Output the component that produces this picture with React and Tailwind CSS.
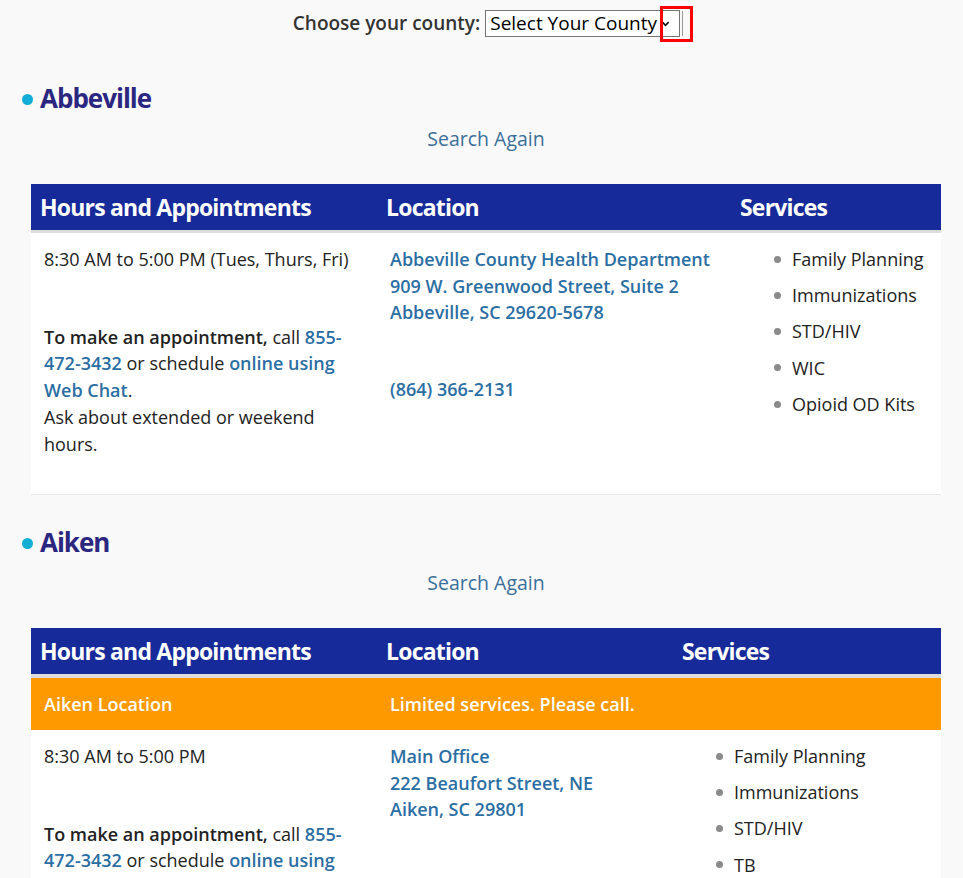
const link = 'text-[#2b6ea3] font-semibold';

const counties = [
  {
    name: 'Abbeville',
    cols: ['w-[346px]', 'w-[354px]', 'w-[210px]'],
    notice: null,
    hours: '8:30 AM to 5:00 PM (Tues, Thurs, Fri)',
    office: ['Abbeville County Health Department', '909 W. Greenwood Street, Suite 2', 'Abbeville, SC 29620-5678'],
    phone: '(864) 366-2131',
    services: ['Family Planning', 'Immunizations', 'STD/HIV', 'WIC', 'Opioid OD Kits'],
  },
  {
    name: 'Aiken',
    cols: ['w-[346px]', 'w-[296px]', 'w-[268px]'],
    notice: ['Aiken Location', 'Limited services. Please call.'],
    hours: '8:30 AM to 5:00 PM',
    office: ['Main Office', '222 Beaufort Street, NE', 'Aiken, SC 29801'],
    phone: null,
    services: ['Family Planning', 'Immunizations', 'STD/HIV', 'TB', 'WIC'],
  },
];

const CountyBlock = ({ c }) => (
  <section>
    <h2 className="flex items-center gap-[7px] pl-[22px] text-[26px] leading-[32px] font-bold tracking-[-1px] text-[#2b2781]">
      <span className="w-[11px] h-[11px] rounded-full bg-[#13aed6] mt-[3px]" />
      {c.name}
    </h2>
    <div className="ml-[31px] w-[910px] text-center mt-[12px] text-[19.5px] leading-[26px] font-medium text-[#3b6f99]">Search Again</div>

    <table className="mt-[32px] ml-[31px] w-[910px] border-collapse text-left">
      <thead>
        <tr className={`bg-[#162a99] text-white border-[#dcdcdc] ${c.notice ? 'border-b-[4px]' : 'border-b-[3px]'}`}>
          <th className={`${c.cols[0]} h-[48px] pl-[9px] text-[23px] font-bold tracking-[-0.8px]`}>Hours and Appointments</th>
          <th className={`${c.cols[1]} h-[48px] pl-[9px] text-[23px] font-bold tracking-[-0.8px]`}>Location</th>
          <th className={`${c.cols[2]} h-[48px] pl-[9px] text-[23px] font-bold tracking-[-0.8px]`}>Services</th>
        </tr>
      </thead>
      <tbody className="text-[18px] leading-[26.7px] text-[#222]">
        {c.notice && (
          <tr className="bg-[#fe9900] text-white font-semibold">
            <td className="py-[12.5px] pl-[13px]">{c.notice[0]}</td>
            <td className="py-[12.5px] pl-[13px]" colSpan={2}>{c.notice[1]}</td>
          </tr>
        )}
        <tr className="bg-white border-b border-[#e6e6e6] align-top">
          <td className="pl-[13px] pr-[21px] pt-[13px] pb-[37px]">
            <p>{c.hours}</p>
            <p className="mt-[51px]">
              <span className="font-semibold">To make an appointment,</span> call{' '}
              <span className={link}>855-472-3432</span> or schedule{' '}
              <span className={link}>online using Web Chat</span>.
            </p>
            <p>Ask about extended or weekend hours.</p>
          </td>
          <td className="pl-[13px] pt-[13px]">
            {c.office.map((l) => (
              <p key={l} className={link}>{l}</p>
            ))}
            {c.phone && <p className={`${link} mt-[50px]`}>{c.phone}</p>}
          </td>
          <td className="pt-[13px] pl-[43px]">
            <ul className="flex flex-col gap-[9.5px]">
              {c.services.map((s) => (
                <li key={s} className="flex items-center gap-[11px]">
                  <span className="w-[7px] h-[7px] rounded-full bg-[#8a8a8a]" />
                  {s}
                </li>
              ))}
            </ul>
          </td>
        </tr>
      </tbody>
    </table>
  </section>
);

export default function App() {
  return (
    <div className="min-h-screen w-full bg-[#f9f9f9] font-['Open_Sans',sans-serif] pb-10">
      <div className="flex justify-center items-center pt-[9px] gap-[5px] pl-[10px]">
        <span className="text-[19px] font-semibold text-[#333]">Choose your county:</span>
        <div className="relative flex items-center h-[27px] w-[195px] bg-white border border-[#767676] pl-[4px] text-[19px] text-black">
          <span>Select Your County</span>
          <svg className="ml-[4px]" width="9" height="9" viewBox="0 0 10 10">
            <path d="M1.5 3.5 L5 7 L8.5 3.5" fill="none" stroke="#111" strokeWidth="1.8" />
          </svg>
          <span className="absolute -right-[4px] top-0 h-[25px] w-px bg-[#999]" />
          <span className="absolute left-[174px] -top-[5px] w-[33px] h-[36px] border-[3px] border-[#ff0000]" />
        </div>
      </div>
      <div className="mt-[44px] flex flex-col gap-[31px]">
        {counties.map((c) => (
          <CountyBlock key={c.name} c={c} />
        ))}
      </div>
    </div>
  );
}
